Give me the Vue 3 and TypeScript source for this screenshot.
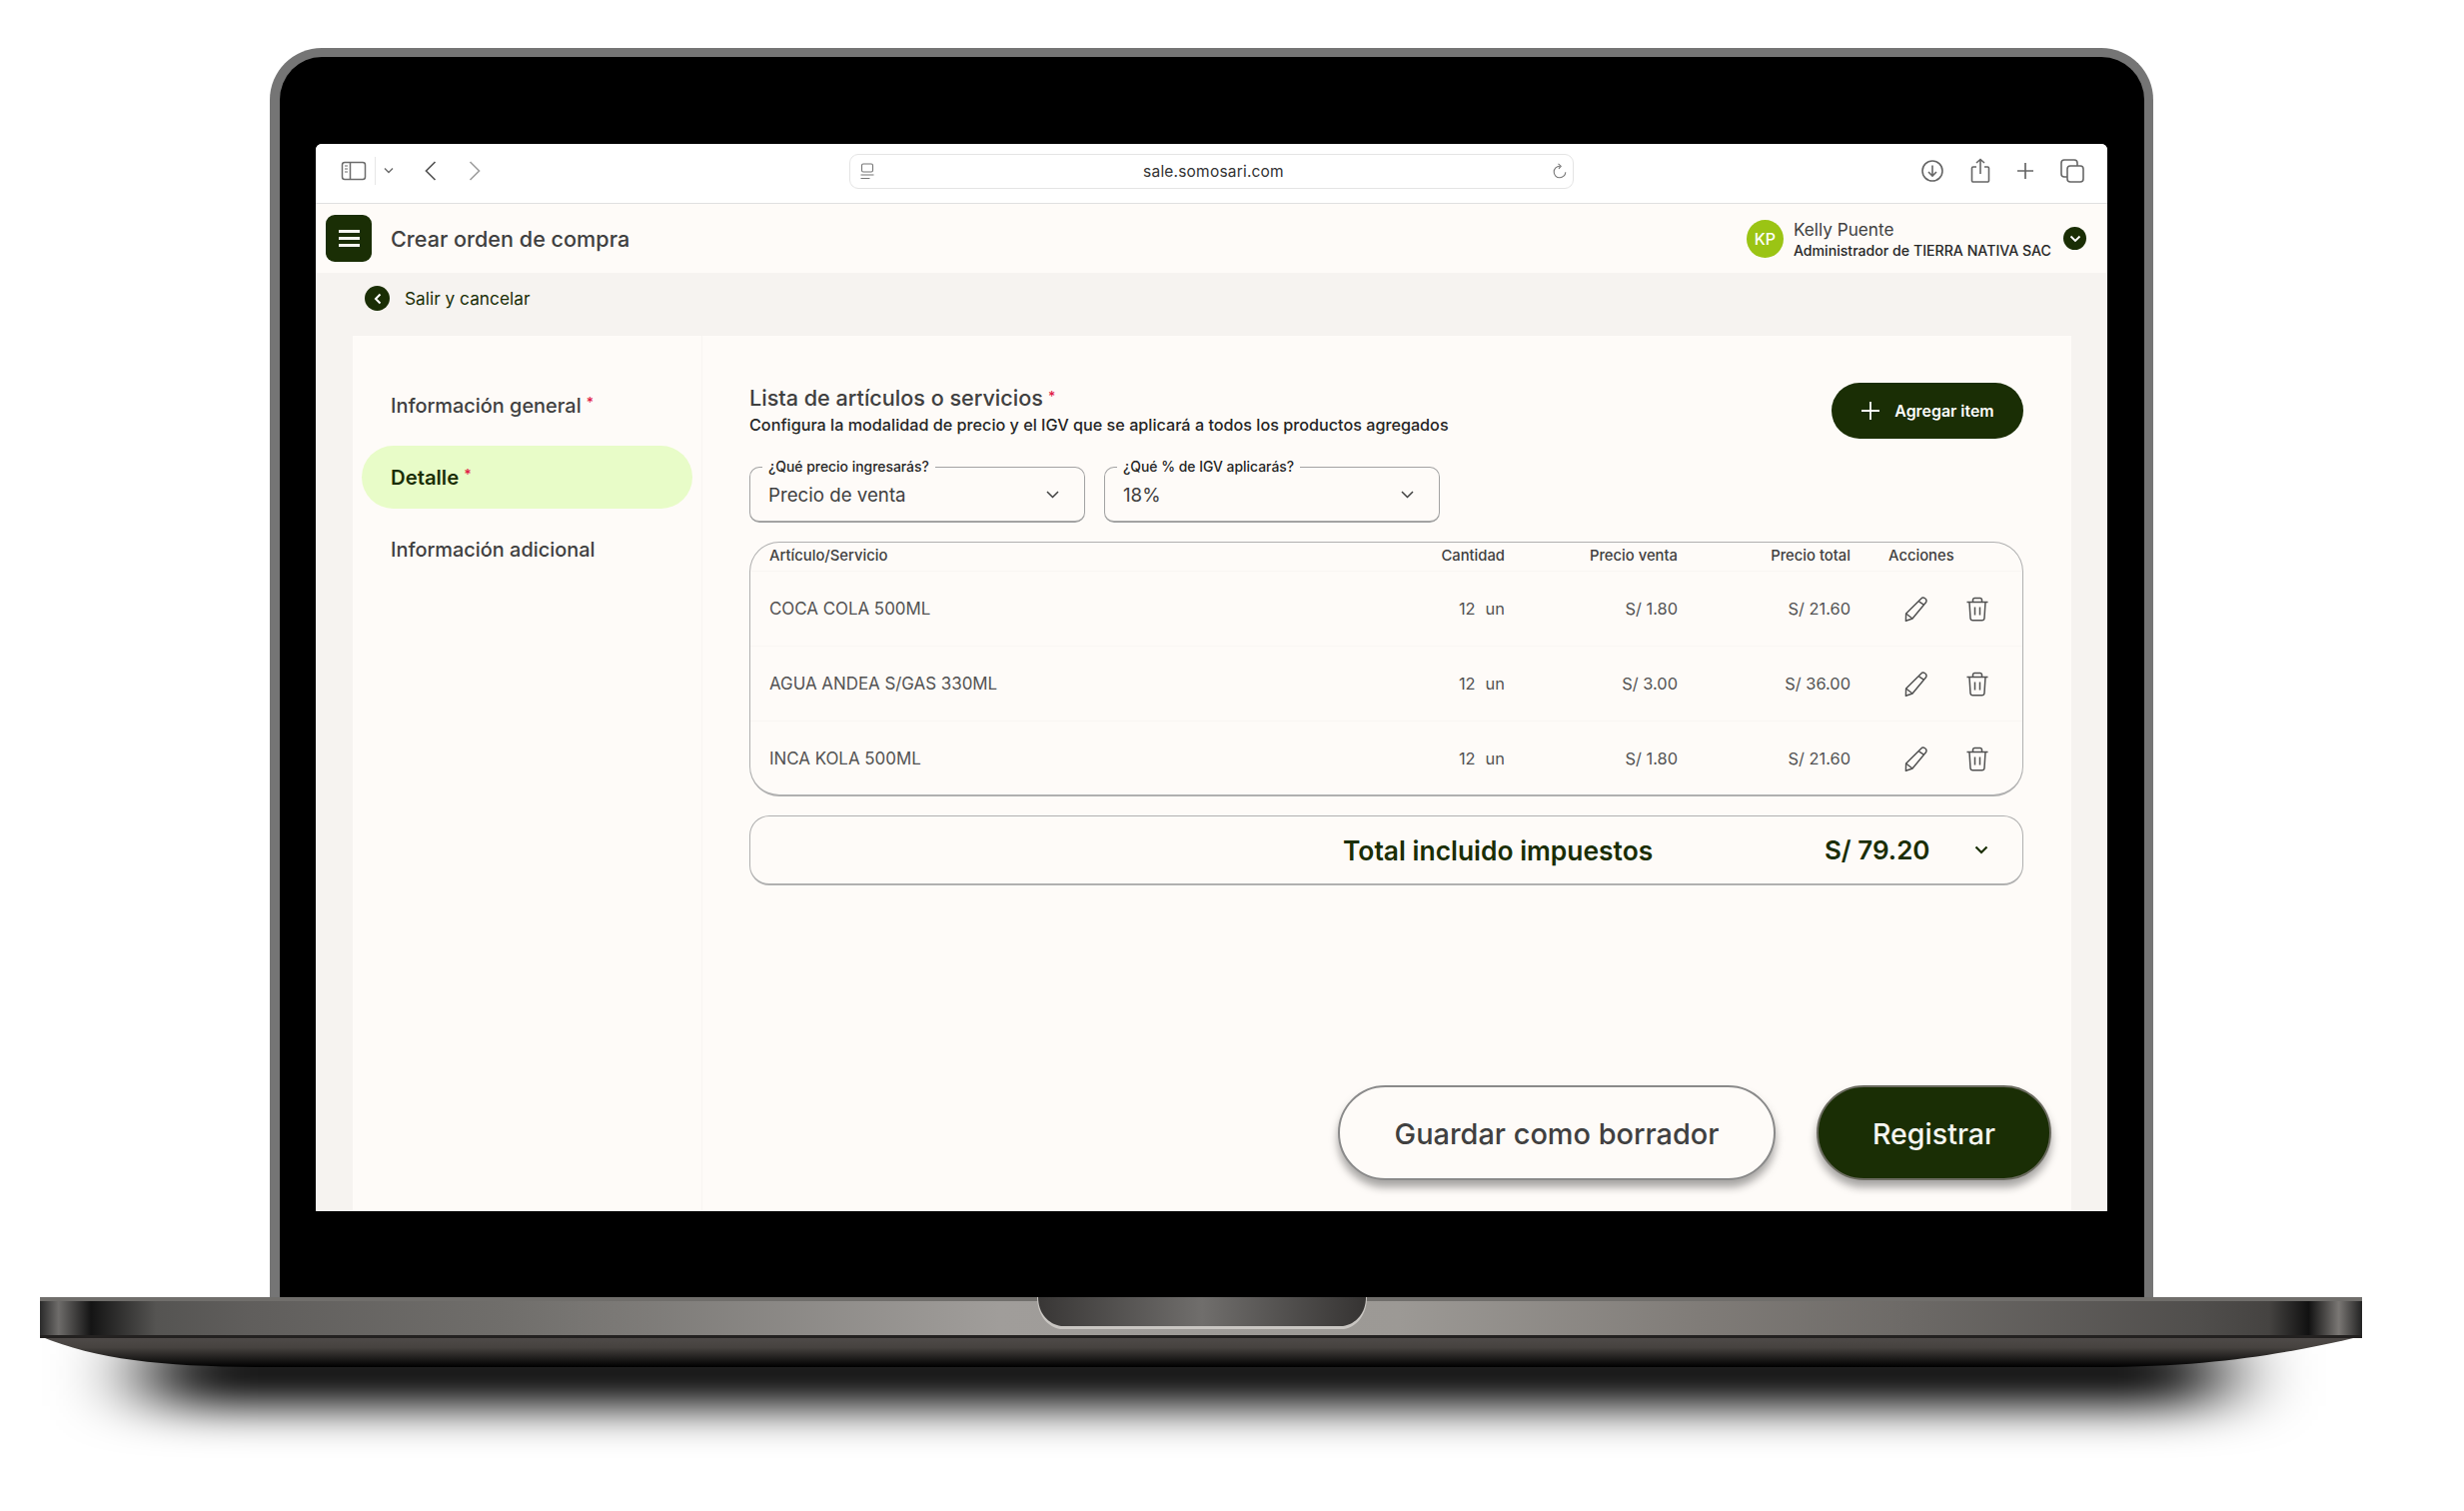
<template>
  <div class="stage">
    <div class="lid">
      <div class="screen">
        <div class="chrome">
          <div class="chrome-left">
            <svg class="ic-sidebar" width="26" height="20" viewBox="0 0 26 20" fill="none" stroke="#6b6b6b" stroke-width="1.5">
              <rect x="1.5" y="1.5" width="23" height="17" rx="2.5" />
              <path d="M9.5 1.5v17" />
              <path d="M4 5h3M4 8h3M4 11h3" stroke-width="1.2" />
            </svg>
            <span class="chrome-sep"></span>
            <svg class="ic-down" width="10" height="7" viewBox="0 0 10 7" fill="none" stroke="#6b6b6b" stroke-width="1.4">
              <path d="M1 1.5l4 4 4-4" />
            </svg>
            <svg class="ic-back" width="12" height="20" viewBox="0 0 12 20" fill="none" stroke="#555" stroke-width="1.7">
              <path d="M10.5 1L1.5 10l9 9" />
            </svg>
            <svg class="ic-forward" width="12" height="20" viewBox="0 0 12 20" fill="none" stroke="#a0a0a0" stroke-width="1.7">
              <path d="M1.5 1l9 9-9 9" />
            </svg>
          </div>
          <div class="url-bar">
            <svg width="14" height="17" viewBox="0 0 14 17" fill="none" stroke="#777" stroke-width="1.1">
              <rect x="1.5" y="1" width="11" height="8" rx="1.5" />
              <path d="M0.5 12h13M0.5 15.5h9" />
            </svg>
            <span class="url-text">sale.somosari.com</span>
            <svg width="14" height="17" viewBox="0 0 14 17" fill="none" stroke="#777" stroke-width="1.1">
              <path d="M7 3.2a5.8 5.8 0 1 0 5.8 6" />
              <path d="M5.5 0.8L8.2 3.2 6 5.8" />
            </svg>
          </div>
          <div class="chrome-right">
            <svg width="24" height="24" viewBox="0 0 24 24" fill="none" stroke="#666" stroke-width="1.6">
              <circle cx="12" cy="12" r="10" />
              <path d="M12 6.5v10M8 13l4 4 4-4" />
            </svg>
            <svg width="20" height="26" viewBox="0 0 20 26" fill="none" stroke="#666" stroke-width="1.6">
              <path d="M6 9H2.8A1.3 1.3 0 0 0 1.5 10.3v12.4A1.3 1.3 0 0 0 2.8 24h14.4a1.3 1.3 0 0 0 1.3-1.3V10.3A1.3 1.3 0 0 0 17.2 9H14" />
              <path d="M10 16V1.5M6 5l4-3.5L14 5" />
            </svg>
            <svg width="18" height="18" viewBox="0 0 18 18" fill="none" stroke="#666" stroke-width="1.7">
              <path d="M9 1v16M1 9h16" />
            </svg>
            <svg width="24" height="24" viewBox="0 0 24 24" fill="none" stroke="#666" stroke-width="1.6">
              <rect x="7" y="7" width="16" height="16" rx="3" />
              <path d="M7 18H4a3 3 0 0 1-3-3V4a3 3 0 0 1 3-3h10a3 3 0 0 1 3 3v3" />
            </svg>
          </div>
        </div>

        <header class="app-header">
          <button class="menu-btn" type="button">
            <span></span><span></span><span></span>
          </button>
          <h1 class="page-title">Crear orden de compra</h1>
          <div class="user">
            <span class="avatar">KP</span>
            <div class="user-text">
              <span class="user-name">Kelly Puente</span>
              <span class="user-role">Administrador de TIERRA NATIVA SAC</span>
            </div>
            <span class="user-toggle">
              <svg width="12" height="8" viewBox="0 0 12 8" fill="none" stroke="#fff" stroke-width="1.8">
                <path d="M1.5 1.5L6 6l4.5-4.5" />
              </svg>
            </span>
          </div>
        </header>

        <div class="page-body">
          <div class="back-row">
            <span class="back-dot">
              <svg width="8" height="12" viewBox="0 0 8 12" fill="none" stroke="#fff" stroke-width="2">
                <path d="M6.5 1.5L2 6l4.5 4.5" />
              </svg>
            </span>
            <span class="back-label">Salir y cancelar</span>
          </div>

          <div class="card">
            <nav class="side">
              <a
                v-for="item in sections"
                :key="item.label"
                class="side-item"
                :class="{ 'side-item--active': item.active }"
              >
                {{ item.label }}<span v-if="item.required" class="req">*</span>
              </a>
            </nav>

            <main class="main">
              <div class="main-head">
                <div>
                  <h2 class="main-title">Lista de artículos o servicios<span class="req">*</span></h2>
                  <p class="main-sub">Configura la modalidad de precio y el IGV que se aplicará a todos los productos agregados</p>
                </div>
                <button class="add-btn" type="button">
                  <svg width="20" height="20" viewBox="0 0 20 20" fill="none" stroke="#fff" stroke-width="1.8">
                    <path d="M10 1v18M1 10h18" />
                  </svg>
                  Agregar item
                </button>
              </div>

              <div class="selects">
                <div v-for="field in fields" :key="field.label" class="select">
                  <span class="select-label">{{ field.label }}</span>
                  <span class="select-value">{{ field.value }}</span>
                  <svg width="13" height="8" viewBox="0 0 13 8" fill="none" stroke="#404040" stroke-width="1.5">
                    <path d="M1 1l5.5 5.5L12 1" />
                  </svg>
                </div>
              </div>

              <div class="items">
                <div class="row row--head">
                  <span>Artículo/Servicio</span>
                  <span class="num">Cantidad</span>
                  <span class="num">Precio venta</span>
                  <span class="num">Precio total</span>
                  <span class="actions-head">Acciones</span>
                </div>
                <div v-for="item in items" :key="item.name" class="row">
                  <span>{{ item.name }}</span>
                  <span class="num qty"><span>{{ item.qty }}</span><span>un</span></span>
                  <span class="num">{{ item.price }}</span>
                  <span class="num">{{ item.total }}</span>
                  <span class="actions">
                    <svg width="26" height="26" viewBox="0 0 26 26" fill="none" stroke="#525252" stroke-width="1.5" stroke-linejoin="round">
                      <path d="M17.5 3.2a3.1 3.1 0 0 1 5 3.6L9 23l-6.6 2.2L2.6 18z" />
                      <path d="M15.5 5.8l5.2 3.5" />
                      <path d="M2.6 18L9 23" />
                    </svg>
                    <svg width="24" height="25" viewBox="0 0 24 25" fill="none" stroke="#525252" stroke-width="1.5" stroke-linejoin="round">
                      <path d="M1.5 5.5h21" />
                      <path d="M7.5 5.5V3.2A1.7 1.7 0 0 1 9.2 1.5h5.600a1.7 1.7 0 0 1 1.7 1.7v2.3" />
                      <path d="M4 5.5l1 16a2.5 2.5 0 0 0 2.5 2.3h9a2.5 2.5 0 0 0 2.5-2.3l1-16" />
                      <path d="M9.5 10.5v8M14.5 10.5v8" />
                    </svg>
                  </span>
                </div>
              </div>

              <div class="total-box">
                <span class="total-label">Total incluido impuestos</span>
                <span class="total-value">S/ 79.20</span>
                <svg width="14" height="9" viewBox="0 0 14 9" fill="none" stroke="#1a2e05" stroke-width="2.2">
                  <path d="M1.5 1.5L7 7l5.5-5.5" />
                </svg>
              </div>

              <div class="footer-actions">
                <button class="btn btn--ghost" type="button">Guardar como borrador</button>
                <button class="btn btn--solid" type="button">Registrar</button>
              </div>
            </main>
          </div>
        </div>
      </div>
    </div>

    <svg class="base" width="2466" height="214" viewBox="0 1298 2466 214">
      <defs>
        <linearGradient id="band" x1="40" x2="2364" y1="0" y2="0" gradientUnits="userSpaceOnUse">
          <stop offset="0" stop-color="#2a2a2a" />
          <stop offset="0.008" stop-color="#6e6c6a" />
          <stop offset="0.022" stop-color="#141414" />
          <stop offset="0.05" stop-color="#555452" />
          <stop offset="0.09" stop-color="#605e5c" />
          <stop offset="0.2" stop-color="#706e6b" />
          <stop offset="0.413" stop-color="#a09d9a" />
          <stop offset="0.585" stop-color="#9c9995" />
          <stop offset="0.714" stop-color="#807c78" />
          <stop offset="0.808" stop-color="#6c6966" />
          <stop offset="0.93" stop-color="#504e4c" />
          <stop offset="0.96" stop-color="#454341" />
          <stop offset="0.977" stop-color="#111" />
          <stop offset="0.99" stop-color="#7a7774" />
          <stop offset="1" stop-color="#222" />
        </linearGradient>
        <linearGradient id="under" x1="0" x2="0" y1="1338" y2="1368" gradientUnits="userSpaceOnUse">
          <stop offset="0" stop-color="#4f4b49" />
          <stop offset="0.35" stop-color="#46423f" />
          <stop offset="0.95" stop-color="#050505" />
          <stop offset="1" stop-color="#000" />
        </linearGradient>
        <linearGradient id="notch" x1="1038" x2="1368" y1="0" y2="0" gradientUnits="userSpaceOnUse">
          <stop offset="0" stop-color="#383635" />
          <stop offset="0.5" stop-color="#706e6c" />
          <stop offset="1" stop-color="#353332" />
        </linearGradient>
        <filter id="soft" x="-10%" y="-200%" width="120%" height="500%">
          <feGaussianBlur stdDeviation="45 22" />
        </filter>
      </defs>
      <rect x="150" y="1340" width="2070" height="67" fill="#000" filter="url(#soft)" />
      <rect x="40" y="1298" width="2324" height="4" fill="#706e6b" />
      <rect x="40" y="1302" width="2324" height="35" fill="url(#band)" />
      <path d="M40 1337H2364C2300 1352 2220 1368 2100 1368H273C170 1368 100 1362 40 1337Z" fill="url(#under)" />
      <rect x="40" y="1336" width="2324" height="3" fill="#232120" />
      <path d="M1038 1298H1368C1368 1315 1358 1328 1345 1330H1061C1048 1328 1038 1315 1038 1298Z" fill="#c9c6c2" />
      <path d="M1039 1298H1367C1367 1314 1357 1325 1344 1327H1062C1049 1325 1039 1314 1039 1298Z" fill="url(#notch)" />
    </svg>
  </div>
</template>

<script setup lang="ts">
type Section = { label: string; required: boolean; active?: boolean };
type Item = { name: string; qty: number; price: string; total: string };

const sections: Section[] = [
  { label: 'Información general', required: true },
  { label: 'Detalle', required: true, active: true },
  { label: 'Información adicional', required: false },
];

const fields = [
  { label: '¿Qué precio ingresarás?', value: 'Precio de venta' },
  { label: '¿Qué % de IGV aplicarás?', value: '18%' },
];

const items: Item[] = [
  { name: 'COCA COLA 500ML', qty: 12, price: 'S/ 1.80', total: 'S/ 21.60' },
  { name: 'AGUA ANDEA S/GAS 330ML', qty: 12, price: 'S/ 3.00', total: 'S/ 36.00' },
  { name: 'INCA KOLA 500ML', qty: 12, price: 'S/ 1.80', total: 'S/ 21.60' },
];
</script>

<style>
html,
body {
  margin: 0;
  background: #fff;
}
</style>

<style scoped>
.stage {
  width: 2466px;
  height: 1512px;
  padding-top: 48px;
  box-sizing: border-box;
  overflow: hidden;
  background: #fff;
  font-family: Inter, 'Liberation Sans', sans-serif;
}

.lid {
  width: 1885px;
  height: 1250px;
  margin-left: 270px;
  box-sizing: border-box;
  padding: 87px 37px 86px 36px;
  background: #000;
  border: solid #757575;
  border-width: 9px 9px 0 10px;
  border-radius: 52px 52px 0 0;
}

.screen {
  height: 100%;
  display: flex;
  flex-direction: column;
  overflow: hidden;
  border-radius: 6px 6px 0 0;
  background: #f6f3f0;
}

.chrome {
  height: 60px;
  flex: none;
  box-sizing: border-box;
  display: flex;
  align-items: center;
  background: #fff;
  border-bottom: 1.5px solid #e0e0e0;
}

.chrome-left {
  width: 534px;
  flex: none;
  display: flex;
  align-items: center;
  padding-left: 25px;
  margin-top: -6px;
  box-sizing: border-box;
}

.chrome-sep {
  width: 1px;
  height: 28px;
  margin: 0 8px;
  background: #e6e6e6;
}

.ic-back {
  margin-left: 31px;
}

.ic-forward {
  margin-left: 32px;
}

.url-bar {
  width: 725px;
  height: 35px;
  margin-top: -4px;
  flex: none;
  box-sizing: border-box;
  display: flex;
  align-items: center;
  justify-content: space-between;
  padding: 0 6px 0 10px;
  border: 1.5px solid #e4e4e4;
  border-radius: 9px;
  background: #fff;
}

.url-text {
  font-size: 15.5px;
  letter-spacing: 0.2px;
  color: #333;
}

.chrome-right {
  flex: 1;
  display: flex;
  align-items: center;
  justify-content: flex-end;
  gap: 26px;
  padding-right: 23.5px;
  margin-top: -6px;
}

.app-header {
  height: 69px;
  flex: none;
  box-sizing: border-box;
  display: flex;
  align-items: center;
  padding: 0 21px 0 10px;
  background: #fefbf8;
}

.menu-btn {
  width: 46px;
  height: 47px;
  padding: 0;
  display: flex;
  flex-direction: column;
  align-items: center;
  justify-content: center;
  gap: 4px;
  border: 0;
  border-radius: 9px;
  background: #1a2e05;
}

.menu-btn span {
  width: 21px;
  height: 3px;
  background: #f5f5f0;
}

.page-title {
  margin: 0 0 0 19px;
  font-size: 21.6px;
  font-weight: 500;
  color: #404040;
}

.user {
  margin-left: auto;
  display: flex;
  align-items: center;
}

.avatar {
  width: 37px;
  height: 38px;
  display: flex;
  align-items: center;
  justify-content: center;
  border-radius: 50%;
  background: #9bc414;
  color: #fff;
  font-size: 16px;
  font-weight: 500;
}

.user-text {
  margin-left: 10px;
  padding-top: 3px;
  display: flex;
  flex-direction: column;
  gap: 2px;
}

.user-name {
  font-size: 17.2px;
  line-height: 19px;
  color: #404040;
}

.user-role {
  font-size: 14.15px;
  line-height: 19px;
  font-weight: 500;
  color: #262626;
}

.user-toggle {
  width: 23px;
  height: 23px;
  margin-left: 12px;
  display: flex;
  align-items: center;
  justify-content: center;
  border-radius: 50%;
  background: #1a2e05;
}

.page-body {
  flex: 1;
  min-height: 0;
  display: flex;
  flex-direction: column;
  padding: 0 36px 0 37px;
}

.back-row {
  height: 63px;
  flex: none;
  box-sizing: border-box;
  display: flex;
  align-items: center;
  gap: 15px;
  padding: 0 0 12px 12px;
}

.back-dot {
  width: 25px;
  height: 25px;
  display: flex;
  align-items: center;
  justify-content: center;
  border-radius: 50%;
  background: #1a2e05;
}

.back-label {
  font-size: 17.3px;
  font-weight: 400;
  color: #1a2e05;
}

.card {
  flex: 1;
  min-height: 0;
  display: grid;
  grid-template-columns: 350px 1fr;
  background: #fefbf8;
}

.side {
  display: flex;
  flex-direction: column;
  gap: 9px;
  padding: 38px 9px 0;
  border-right: 1px solid #f8f5f2;
}

.side-item {
  height: 63px;
  padding-left: 29px;
  display: flex;
  align-items: center;
  font-size: 19.9px;
  font-weight: 500;
  color: #404040;
}

.side-item--active {
  border-radius: 32px;
  background: #e8fcc8;
  color: #1a2e05;
  font-size: 20.3px;
  font-weight: 600;
}

.req {
  margin-left: 5px;
  align-self: flex-start;
  color: #e11d48;
  font-size: 14px;
}

.side-item .req {
  align-self: auto;
  margin-top: -6px;
}

.main {
  min-width: 0;
  display: flex;
  flex-direction: column;
  padding: 46px 48px 0 47px;
}

.main-head {
  height: 85px;
  flex: none;
  display: flex;
  align-items: flex-start;
  justify-content: space-between;
}

.main-title {
  margin: 3px 0 0;
  font-size: 21.6px;
  line-height: 24px;
  font-weight: 500;
  color: #404040;
}

.main-title .req {
  vertical-align: 4px;
}

.main-sub {
  margin: 4px 0 0;
  font-size: 16.2px;
  line-height: 22px;
  font-weight: 500;
  color: #262626;
}

.add-btn {
  width: 192px;
  height: 56px;
  margin-top: 1px;
  display: flex;
  align-items: center;
  justify-content: center;
  gap: 14px;
  padding: 0;
  border: 0;
  border-radius: 28px;
  background: #1a2e05;
  color: #fff;
  font: 600 15.9px Inter, sans-serif;
}

.selects {
  display: flex;
  gap: 19px;
}

.select {
  position: relative;
  width: 336px;
  height: 56px;
  box-sizing: border-box;
  display: flex;
  align-items: center;
  justify-content: space-between;
  padding: 1px 25px 0 18px;
  border: 1.5px solid #a3a3a3;
  border-bottom-width: 2px;
  border-radius: 10px;
}

.select-label {
  position: absolute;
  top: -9px;
  left: 12px;
  padding: 0 6px;
  background: #fefbf8;
  font-size: 13.9px;
  line-height: 17px;
  font-weight: 500;
  color: #262626;
}

.select-value {
  font-size: 18.7px;
  color: #404040;
}

.items {
  margin-top: 19px;
  flex: none;
  height: 255px;
  box-sizing: border-box;
  border: 1.5px solid #b0b0b0;
  border-bottom-width: 2px;
  border-radius: 30px;
  overflow: hidden;
}

.row {
  height: 75px;
  display: grid;
  grid-template-columns: 1fr 110px 173px 173px 172px;
  align-items: center;
  padding-left: 19px;
  font-size: 16.9px;
  color: #525252;
  border-top: 1.5px solid #f9f6f3;
  box-sizing: border-box;
}

.row .num {
  font-size: 16.4px;
}

.row--head,
.row--head .num {
  font-size: 14.8px;
}

.row--head {
  height: 28px;
  padding-bottom: 2px;
  border-top: 0;
  font-weight: 500;
  color: #404040;
}

.num {
  text-align: right;
}

.qty {
  display: flex;
  justify-content: flex-end;
  gap: 10px;
}

.actions-head {
  padding-left: 38px;
}

.actions {
  display: flex;
  align-items: center;
  gap: 36px;
  padding-left: 53px;
}

.total-box {
  height: 70px;
  margin-top: 19px;
  flex: none;
  box-sizing: border-box;
  display: flex;
  align-items: center;
  padding: 0 34.5px 0 593px;
  border: 1.5px solid #b0b0b0;
  border-bottom-width: 2px;
  border-radius: 20px;
  color: #1a2e05;
  font-size: 26.4px;
  font-weight: 600;
}

.total-value {
  margin-left: auto;
  font-size: 26px;
}

.total-box svg {
  margin-left: 44px;
}

.footer-actions {
  margin-top: 200px;
  margin-right: -28px;
  display: flex;
  justify-content: flex-end;
  gap: 41px;
}

.btn {
  height: 95px;
  box-sizing: border-box;
  padding: 2px 0 0;
  border-radius: 48px;
  font: 500 28.6px Inter, sans-serif;
  box-shadow: 0 7px 9px rgba(0, 0, 0, 0.35);
}

.btn--ghost {
  width: 438px;
  border: 2px solid #8a8a8a;
  background: #fefbf8;
  color: #404040;
  font-size: 28.9px;
}

.btn--solid {
  width: 235px;
  border: 2px solid #6b6b60;
  background: #1a2e05;
  color: #f5f5f0;
}

.base {
  display: block;
}
</style>
